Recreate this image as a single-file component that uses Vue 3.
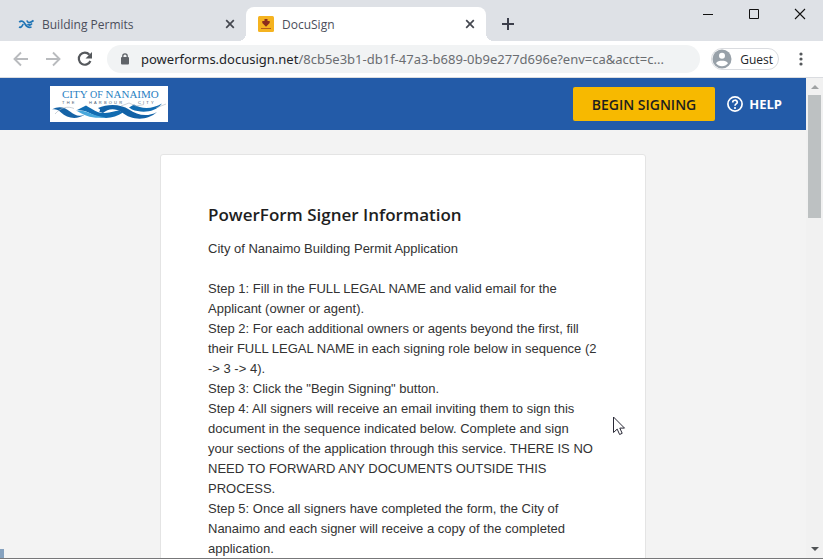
<script setup>
import { ref } from 'vue'

const tabs = [
  { title: 'Building Permits', icon: 'waves', active: false },
  { title: 'DocuSign', icon: 'docusign', active: true },
]
const host = 'powerforms.docusign.net'
const path = '/8cb5e3b1-db1f-47a3-b689-0b9e277d696e?env=ca&acct=c...'
const steps = ref([
  'Step 1: Fill in the FULL LEGAL NAME and valid email for the Applicant (owner or agent).',
  'Step 2: For each additional owners or agents beyond the first, fill their FULL LEGAL NAME in each signing role below in sequence (2 -> 3 -> 4).',
  'Step 3: Click the "Begin Signing" button.',
  'Step 4: All signers will receive an email inviting them to sign this document in the sequence indicated below. Complete and sign your sections of the application through this service. THERE IS NO NEED TO FORWARD ANY DOCUMENTS OUTSIDE THIS PROCESS.',
  'Step 5: Once all signers have completed the form, the City of Nanaimo and each signer will receive a copy of the completed application.',
])
</script>

<template>
  <div class="browser">
    <div class="titlebar">
      <div class="tabs">
        <div v-for="tab in tabs" :key="tab.title" class="tab" :class="{ active: tab.active }">
          <svg v-if="tab.icon === 'waves'" class="favicon" viewBox="0 0 16 16" aria-hidden="true">
            <path d="M1 11C3 12 4.300 10 5.200 8M1.200 6.200C3.500 3.800 5.500 5.500 7 8S10.500 12 13.500 11M8.800 4.500C10 7.500 12.500 7 15.500 4.500M9.500 8.200C11 9.500 12.500 9.200 14 7.500" fill="none" stroke="#1f74b5" stroke-width="1.700" />
          </svg>
          <svg v-else class="favicon" viewBox="0 0 16 16" aria-hidden="true">
            <rect width="16" height="16" rx="1.500" fill="#f5b320" />
            <path d="M6.500 3h3v2h2.200v2L8 10.800 4.300 7V5h2.200z" fill="#8c2c1d" />
            <path d="M3 12.500h10" stroke="#b65b1c" />
          </svg>
          <span class="tab-title">{{ tab.title }}</span>
          <button class="icon-btn close" :aria-label="'Close ' + tab.title">
            <svg width="10" height="10" viewBox="0 0 10 10"><path d="M1.200 1.200l7.600 7.600M8.800 1.200L1.200 8.800" stroke="#44474f" stroke-width="1.700" /></svg>
          </button>
        </div>
        <button class="icon-btn new-tab" aria-label="New tab">
          <svg width="12" height="12" viewBox="0 0 12 12"><path d="M6 0v12M0 6h12" stroke="#3c3f4b" stroke-width="2" /></svg>
        </button>
      </div>
      <div class="window-controls">
        <button class="icon-btn" aria-label="Minimize"><svg width="12" height="12" viewBox="0 0 12 12"><path d="M1 6.500h10" stroke="#111" /></svg></button>
        <button class="icon-btn" aria-label="Maximize"><svg width="12" height="12" viewBox="0 0 12 12"><path d="M1.500 1.500h9v9h-9z" fill="none" stroke="#111" /></svg></button>
        <button class="icon-btn" aria-label="Close"><svg width="12" height="12" viewBox="0 0 12 12"><path d="M1 1l10 10M11 1L1 11" stroke="#111" stroke-width="1.100" /></svg></button>
      </div>
    </div>

    <div class="toolbar">
      <button class="icon-btn nav" aria-label="Back"><svg width="16" height="16" viewBox="0 0 16 16"><path d="M15 8H2M8 1.500L1.500 8 8 14.500" fill="none" stroke="#b9bbbe" stroke-width="1.900" /></svg></button>
      <button class="icon-btn nav" aria-label="Forward"><svg width="16" height="16" viewBox="0 0 16 16"><path d="M1 8h13M8 1.500L14.500 8 8 14.500" fill="none" stroke="#b9bbbe" stroke-width="1.900" /></svg></button>
      <button class="icon-btn nav" aria-label="Reload"><svg width="16" height="16" viewBox="0 0 16 16"><path d="M13.400 10A6 6 0 1 1 12.400 3.800" fill="none" stroke="#55585c" stroke-width="2.200" /><path d="M15 1v6.500H8.500z" fill="#55585c" /></svg></button>
      <div class="address">
        <svg width="10" height="12" viewBox="0 0 10 12" aria-hidden="true"><rect x="1" y="4" width="8" height="7.500" rx="1" fill="#5f6368" /><path d="M2.800 5V3a2.200 2.200 0 0 1 4.400 0v2" fill="none" stroke="#5f6368" stroke-width="1.300" /></svg>
        <div class="url">{{ host }}<span>{{ path }}</span></div>
      </div>
      <button class="profile">
        <svg width="20" height="20" viewBox="0 0 20 20" aria-hidden="true"><circle cx="10" cy="10" r="9.500" fill="#98a1a9" /><circle cx="10" cy="6.800" r="3" fill="#fff" /><path d="M4 14.300C5 12.300 7.500 11.700 10 11.700s5 .6 6 2.600c-1.500 1.900-3.500 2.900-6 2.900s-4.500-1-6-2.900z" fill="#fff" /></svg>
        <span>Guest</span>
      </button>
      <button class="icon-btn menu" aria-label="Menu"><svg width="4" height="14" viewBox="0 0 4 14"><g fill="#55585c"><circle cx="2" cy="2" r="1.600" /><circle cx="2" cy="7" r="1.600" /><circle cx="2" cy="12" r="1.600" /></g></svg></button>
    </div>

    <div class="viewport">
      <div class="page">
        <header class="site-header">
          <svg class="logo" width="118" height="36" viewBox="0 0 118 36" role="img" aria-label="City of Nanaimo, the Harbour City">
            <rect width="118" height="36" fill="#fff" />
            <text x="12" y="12" class="logo-name">CITY <tspan class="logo-of">OF</tspan> NANAIMO</text>
            <g class="logo-sub"><text x="12" y="18">T&#160; H&#160; E</text><text x="39" y="18">H&#160; A&#160; R&#160; B&#160; O&#160; U&#160; R</text><text x="88" y="18">C&#160; I&#160; T&#160; Y</text></g>
            <path d="M2 23.500C8 20 14 20.500 20 25.500C25 29.500 29 31 35 28.500C27 34 17 32.500 11 26.500C8 23.500 5 22.800 2 23.500z" fill="#1563a6" />
            <path d="M26 24.500L36 19.500C43 23.500 48 27.500 55 27C61 26.500 65 25 69 24.500L73 26.500C65 32 55 33.500 46 30C39 27 34 23.500 26 24.500z" fill="#126cb1" />
            <path d="M27 25C38 23.500 43 31 56 31.200C44 33.500 34 29.500 27 25z" fill="#48a8dc" />
            <path d="M48 22C58 17.500 71 18 79 23.500C87 29 97 31.500 107 26C97 35.500 81 34 72 26.500C65 21.500 58 22.500 53 27L49 25.500C51 24 50 23 48 22z" fill="#1262a7" />
            <path d="M79 21.500L84 18.500C91 23 102 23.500 112 17.500C105 27 91 27 82 23.500z" fill="#126cb1" />
            <path d="M5 28C11 21 18 20 24 22.500M71 20L79 17L86 20L94 18.500M106 22L116 18" fill="none" stroke="#a9b4be" stroke-width="0.600" />
          </svg>
          <div class="header-actions">
            <button class="begin">BEGIN SIGNING</button>
            <a class="help" href="#help">
              <svg width="16" height="16" viewBox="0 0 16 16" aria-hidden="true"><circle cx="8" cy="8" r="7.100" fill="none" stroke="#fff" stroke-width="1.700" /><path d="M5.700 6.500C5.700 3.500 10.300 3.500 10.300 6.300C10.300 7.900 8 8 8 9.700" fill="none" stroke="#fff" stroke-width="1.700" /><circle cx="8" cy="12" r="1.100" fill="#fff" /></svg>
              HELP
            </a>
          </div>
        </header>
        <main class="card">
          <h1>PowerForm Signer Information</h1>
          <p class="intro">City of Nanaimo Building Permit Application</p>
          <p v-for="step in steps" :key="step">{{ step }}</p>
        </main>
      </div>
      <div class="scrollbar" aria-hidden="true">
        <svg width="17" height="17" viewBox="0 0 17 17"><path d="M5 11l4-4 4 4z" fill="#9fa2a3" /></svg>
        <div class="thumb"></div>
        <svg class="down" width="17" height="17" viewBox="0 0 17 17"><path d="M5 6h8l-4 4z" fill="#505356" /></svg>
      </div>
      <div class="status-corner"></div>
      <svg class="cursor" width="14" height="20" viewBox="0 0 14 20" aria-hidden="true"><path d="M1.500 1v15.500l3.700-3.400 2.400 5.400 2.600-1.200-2.400-5.200h4.700z" fill="#fff" stroke="#292936" /></svg>
    </div>
  </div>
</template>

<style>
body {
  margin: 0;
  overflow: hidden;
}
</style>

<style scoped>
* {
  box-sizing: border-box;
}
.browser {
  height: 100vh;
  display: flex;
  flex-direction: column;
  font-family: "Open Sans", "Noto Sans", sans-serif;
  background: #fff;
  border-bottom: 1px solid #777779;
}
svg {
  display: block;
  flex: none;
}
button {
  font: inherit;
  border: 0;
  background: none;
  padding: 0;
}
.icon-btn {
  display: grid;
  place-items: center;
  flex: none;
}
.titlebar {
  height: 41px;
  flex: none;
  display: flex;
  justify-content: space-between;
  align-items: flex-start;
  background: #dee1e6;
}
.tabs {
  display: flex;
  padding: 7px 0 0 6px;
}
.tab {
  position: relative;
  width: 240px;
  height: 34px;
  padding: 0 10px 0 12px;
  display: flex;
  align-items: center;
  gap: 8px;
  font-size: 12px;
  color: #4b4e5b;
}
.tab.active {
  background: #fff;
  border-radius: 8px 8px 0 0;
}
.tab.active::before,
.tab.active::after {
  content: "";
  position: absolute;
  bottom: 0;
  width: 8px;
  height: 8px;
}
.tab.active::before {
  right: 100%;
  background: radial-gradient(circle at 0 0, transparent 8px, #fff 8px);
}
.tab.active::after {
  left: 100%;
  background: radial-gradient(circle at 100% 0, transparent 8px, #fff 8px);
}
.favicon {
  width: 16px;
  height: 16px;
}
.tab-title {
  flex: 1;
}
.close {
  width: 12px;
  height: 16px;
}
.new-tab {
  width: 28px;
  height: 34px;
  margin-left: 8px;
}
.window-controls {
  display: flex;
}
.window-controls button {
  width: 46px;
  height: 27px;
}
.toolbar {
  height: 37px;
  flex: none;
  display: flex;
  align-items: center;
  padding: 0 16px 0 5px;
  border-bottom: 1px solid #dadce0;
}
.nav {
  width: 32px;
  height: 28px;
}
.address {
  flex: 1;
  min-width: 0;
  height: 28px;
  margin: 0 11px 0 6px;
  padding: 0 12px 0 13px;
  display: flex;
  align-items: center;
  gap: 11px;
  border-radius: 14px;
  background: #f1f3f4;
}
.url {
  min-width: 0;
  overflow: hidden;
  white-space: nowrap;
  font-family: "Noto Sans", "Open Sans", sans-serif;
  font-size: 13px;
  color: #222428;
}
.url span {
  color: #6a6d71;
}
.profile {
  height: 22px;
  padding: 0 5px 0 0;
  display: flex;
  align-items: center;
  gap: 8px;
  border: 1px solid #dadce0;
  border-radius: 11px;
  font-size: 12px;
  color: #222428;
}
.menu {
  width: 12px;
  height: 28px;
  margin-left: 16px;
}
.viewport {
  position: relative;
  flex: 1;
  min-height: 0;
  display: flex;
  background: #f3f3f3;
}
.page {
  flex: 1;
  min-width: 0;
  overflow: hidden;
}
.site-header {
  height: 52px;
  padding: 0 24px 0 50px;
  display: flex;
  align-items: center;
  justify-content: space-between;
  background: #235ba8;
}
.logo-name {
  font: 11px "Liberation Serif", serif;
  fill: #2980c2;
}
.logo-of {
  font-size: 10px;
}
.logo-sub {
  font: 4px "Liberation Sans", sans-serif;
  fill: #485b72;
}
.header-actions {
  display: flex;
  align-items: center;
  gap: 12px;
}
.begin {
  height: 34px;
  padding: 0 19px;
  border-radius: 2px;
  background: #f7b900;
  color: #1e1e1e;
  font-size: 14px;
  font-weight: 600;
}
.help {
  display: flex;
  align-items: center;
  gap: 6px;
  color: #fff;
  font-size: 13px;
  font-weight: 700;
  text-decoration: none;
}
.card {
  max-width: 486px;
  margin: 24px auto 0;
  padding: 48px 48px 48px 47px;
  border: 1px solid #e4e4e4;
  border-radius: 3px;
  background: #fff;
  color: #333;
  font: 13px/20px "Liberation Sans", Arial, sans-serif;
}
.card h1 {
  margin: 0 0 12px;
  font: 600 17px/24px "Open Sans", sans-serif;
  color: #1e1e1e;
}
.card p {
  margin: 0;
}
.card .intro {
  margin-bottom: 20px;
}
.scrollbar {
  width: 17px;
  flex: none;
  display: flex;
  flex-direction: column;
  background: #f1f1f1;
}
.thumb {
  height: 123px;
  margin: 0 2px;
  background: #bdc1c2;
}
.down {
  margin-top: auto;
}
.status-corner {
  position: absolute;
  left: 0;
  bottom: 0;
  width: 4px;
  height: 9px;
  background: #86a2bf;
}
.cursor {
  position: absolute;
  left: 612px;
  top: 338px;
}
</style>
